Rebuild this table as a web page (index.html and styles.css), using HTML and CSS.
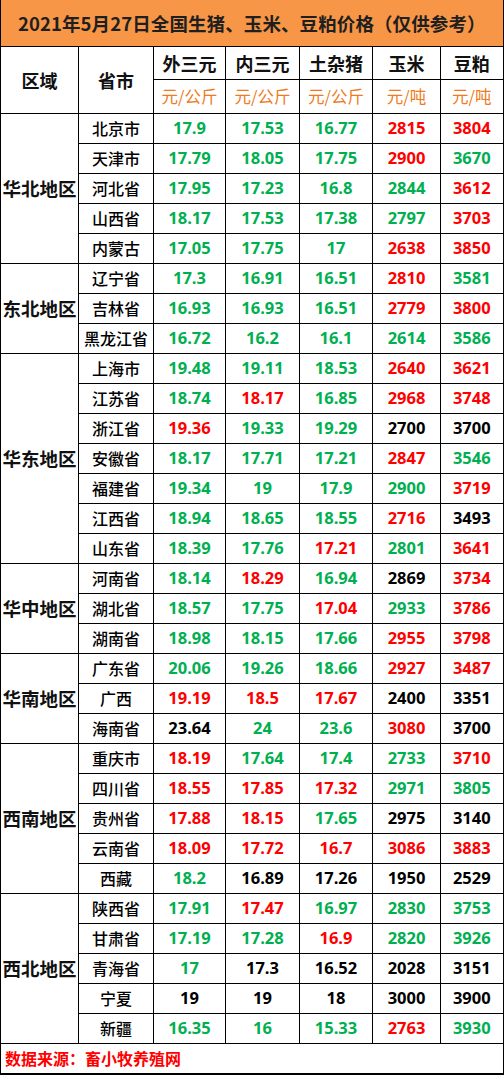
FILE: index.html
```html
<!DOCTYPE html>
<html lang="zh">
<head>
<meta charset="utf-8">
<title>2021年5月27日全国生猪、玉米、豆粕价格</title>
<link rel="stylesheet" href="styles.css">
</head>
<body>
<table class="sheet">
<colgroup>
<col class="c-region"><col class="c-prov"><col class="c-a"><col class="c-b"><col class="c-c"><col class="c-d"><col class="c-e">
</colgroup>
<tbody>
<tr class="title-row"><td colspan="7" class="title">2021年5月27日全国生猪、玉米、豆粕价格（仅供参考）</td></tr>
<tr class="head1">
<td rowspan="2" class="hd">区域</td><td rowspan="2" class="hd">省市</td>
<td class="hd">外三元</td><td class="hd">内三元</td><td class="hd">土杂猪</td><td class="hd">玉米</td><td class="hd">豆粕</td>
</tr>
<tr class="head2">
<td class="unit">元/公斤</td><td class="unit">元/公斤</td><td class="unit">元/公斤</td><td class="unit">元/吨</td><td class="unit">元/吨</td>
</tr>

<tr class="row"><td rowspan="5" class="region">华北地区</td><td class="prov">北京市</td><td class="n g">17.9</td><td class="n g">17.53</td><td class="n g">16.77</td><td class="n red">2815</td><td class="n red">3804</td></tr>
<tr class="row"><td class="prov">天津市</td><td class="n g">17.79</td><td class="n g">18.05</td><td class="n g">17.75</td><td class="n red">2900</td><td class="n g">3670</td></tr>
<tr class="row"><td class="prov">河北省</td><td class="n g">17.95</td><td class="n g">17.23</td><td class="n g">16.8</td><td class="n g">2844</td><td class="n red">3612</td></tr>
<tr class="row"><td class="prov">山西省</td><td class="n g">18.17</td><td class="n g">17.53</td><td class="n g">17.38</td><td class="n g">2797</td><td class="n red">3703</td></tr>
<tr class="row"><td class="prov">内蒙古</td><td class="n g">17.05</td><td class="n g">17.75</td><td class="n g">17</td><td class="n red">2638</td><td class="n red">3850</td></tr>

<tr class="row"><td rowspan="3" class="region">东北地区</td><td class="prov">辽宁省</td><td class="n g">17.3</td><td class="n g">16.91</td><td class="n g">16.51</td><td class="n red">2810</td><td class="n g">3581</td></tr>
<tr class="row"><td class="prov">吉林省</td><td class="n g">16.93</td><td class="n g">16.93</td><td class="n g">16.51</td><td class="n red">2779</td><td class="n red">3800</td></tr>
<tr class="row"><td class="prov">黑龙江省</td><td class="n g">16.72</td><td class="n g">16.2</td><td class="n g">16.1</td><td class="n g">2614</td><td class="n g">3586</td></tr>

<tr class="row"><td rowspan="7" class="region">华东地区</td><td class="prov">上海市</td><td class="n g">19.48</td><td class="n g">19.11</td><td class="n g">18.53</td><td class="n red">2640</td><td class="n red">3621</td></tr>
<tr class="row"><td class="prov">江苏省</td><td class="n g">18.74</td><td class="n red">18.17</td><td class="n g">16.85</td><td class="n red">2968</td><td class="n red">3748</td></tr>
<tr class="row"><td class="prov">浙江省</td><td class="n red">19.36</td><td class="n g">19.33</td><td class="n g">19.29</td><td class="n k">2700</td><td class="n k">3700</td></tr>
<tr class="row"><td class="prov">安徽省</td><td class="n g">18.17</td><td class="n g">17.71</td><td class="n g">17.21</td><td class="n red">2847</td><td class="n g">3546</td></tr>
<tr class="row"><td class="prov">福建省</td><td class="n g">19.34</td><td class="n g">19</td><td class="n g">17.9</td><td class="n g">2900</td><td class="n red">3719</td></tr>
<tr class="row"><td class="prov">江西省</td><td class="n g">18.94</td><td class="n g">18.65</td><td class="n g">18.55</td><td class="n red">2716</td><td class="n k">3493</td></tr>
<tr class="row"><td class="prov">山东省</td><td class="n g">18.39</td><td class="n g">17.76</td><td class="n red">17.21</td><td class="n g">2801</td><td class="n red">3641</td></tr>

<tr class="row"><td rowspan="3" class="region">华中地区</td><td class="prov">河南省</td><td class="n g">18.14</td><td class="n red">18.29</td><td class="n g">16.94</td><td class="n k">2869</td><td class="n red">3734</td></tr>
<tr class="row"><td class="prov">湖北省</td><td class="n g">18.57</td><td class="n g">17.75</td><td class="n red">17.04</td><td class="n g">2933</td><td class="n red">3786</td></tr>
<tr class="row"><td class="prov">湖南省</td><td class="n g">18.98</td><td class="n g">18.15</td><td class="n g">17.66</td><td class="n red">2955</td><td class="n red">3798</td></tr>

<tr class="row"><td rowspan="3" class="region">华南地区</td><td class="prov">广东省</td><td class="n g">20.06</td><td class="n g">19.26</td><td class="n g">18.66</td><td class="n red">2927</td><td class="n red">3487</td></tr>
<tr class="row"><td class="prov">广西</td><td class="n red">19.19</td><td class="n red">18.5</td><td class="n red">17.67</td><td class="n k">2400</td><td class="n k">3351</td></tr>
<tr class="row"><td class="prov">海南省</td><td class="n k">23.64</td><td class="n g">24</td><td class="n g">23.6</td><td class="n red">3080</td><td class="n k">3700</td></tr>

<tr class="row"><td rowspan="5" class="region">西南地区</td><td class="prov">重庆市</td><td class="n red">18.19</td><td class="n g">17.64</td><td class="n g">17.4</td><td class="n g">2733</td><td class="n red">3710</td></tr>
<tr class="row"><td class="prov">四川省</td><td class="n red">18.55</td><td class="n red">17.85</td><td class="n red">17.32</td><td class="n g">2971</td><td class="n g">3805</td></tr>
<tr class="row"><td class="prov">贵州省</td><td class="n red">17.88</td><td class="n red">18.15</td><td class="n g">17.65</td><td class="n k">2975</td><td class="n k">3140</td></tr>
<tr class="row"><td class="prov">云南省</td><td class="n red">18.09</td><td class="n red">17.72</td><td class="n red">16.7</td><td class="n red">3086</td><td class="n red">3883</td></tr>
<tr class="row"><td class="prov">西藏</td><td class="n g">18.2</td><td class="n k">16.89</td><td class="n k">17.26</td><td class="n k">1950</td><td class="n k">2529</td></tr>

<tr class="row"><td rowspan="5" class="region">西北地区</td><td class="prov">陕西省</td><td class="n g">17.91</td><td class="n red">17.47</td><td class="n g">16.97</td><td class="n g">2830</td><td class="n g">3753</td></tr>
<tr class="row"><td class="prov">甘肃省</td><td class="n g">17.19</td><td class="n g">17.28</td><td class="n red">16.9</td><td class="n g">2820</td><td class="n g">3926</td></tr>
<tr class="row"><td class="prov">青海省</td><td class="n g">17</td><td class="n k">17.3</td><td class="n k">16.52</td><td class="n k">2028</td><td class="n k">3151</td></tr>
<tr class="row"><td class="prov">宁夏</td><td class="n k">19</td><td class="n k">19</td><td class="n k">18</td><td class="n k">3000</td><td class="n k">3900</td></tr>
<tr class="row"><td class="prov">新疆</td><td class="n g">16.35</td><td class="n g">16</td><td class="n g">15.33</td><td class="n red">2763</td><td class="n g">3930</td></tr>

<tr class="foot-row"><td colspan="7" class="foot">数据来源：畜小牧养殖网</td></tr>
</tbody>
</table>
</body>
</html>
```

FILE: styles.css
```css
html, body {
  margin: 0;
  padding: 0;
  background: #ffffff;
}

.sheet {
  border-collapse: collapse;
  table-layout: fixed;
  width: 503px;
  font-family: "Noto Sans CJK SC", "Open Sans", sans-serif;
  color: #000;
}

.c-region { width: 78px; }
.c-prov { width: 75px; }
.c-a { width: 72px; }
.c-b { width: 74px; }
.c-c { width: 73px; }
.c-d { width: 68px; }
.c-e { width: 63px; }

.sheet td {
  border: 1px solid #000;
  padding: 0;
  text-align: center;
  vertical-align: middle;
  white-space: nowrap;
  overflow: hidden;
  line-height: 1;
}

.sheet td:last-child {
  border-right: 2px solid #000;
}

.title-row { height: 46px; }
.title {
  background: #f79646;
  border-top: 0 !important;
  font-weight: 700;
  font-size: 18.5px;
  color: #1f1f1f;
  letter-spacing: 0.1px;
}

.head1 { height: 33px; }
.head2 { height: 34px; }

.hd {
  font-weight: 700;
  font-size: 18px;
  color: #111;
}

.unit {
  font-size: 16.5px;
  color: #ee7a22;
  font-weight: 400;
}

.row { height: 30px; }

.region {
  font-weight: 700;
  font-size: 18.5px;
  color: #111;
}

.prov {
  font-size: 16px;
  font-weight: 500;
  color: #000;
}

.n {
  font-family: "Open Sans", "Noto Sans", sans-serif;
  font-weight: 700;
  font-size: 16.5px;
}

.g { color: #00b050; }
.red { color: #ff0000; }
.k { color: #000000; }

.foot-row { height: 31px; }
.foot {
  text-align: left !important;
  padding-left: 4px !important;
  color: #ff0000;
  font-weight: 700;
  font-size: 16px;
  border-bottom: 2px solid #000 !important;
}
```
